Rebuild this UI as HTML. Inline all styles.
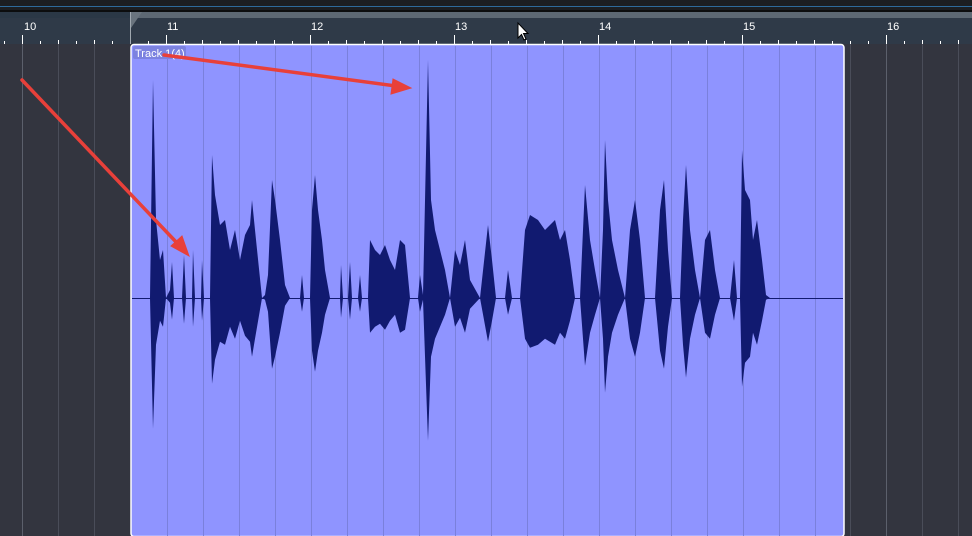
<!DOCTYPE html>
<html><head><meta charset="utf-8"><style>
body{margin:0;width:972px;height:536px;overflow:hidden;background:#33353f;font-family:"Liberation Sans",sans-serif;position:relative}
div{position:absolute}
</style></head><body>
<div style="left:0;top:0;width:972px;height:12px;background:#1c1e21"></div>
<div style="left:0;top:6px;width:972px;height:1px;background:#2e6a9a"></div>
<div style="left:0;top:10px;width:972px;height:2px;background:#0c0d0e"></div>
<div style="left:0;top:12px;width:972px;height:32px;background:#2f3a48"></div>
<div style="left:0;top:12px;width:130px;height:6px;background:#2b3846"></div>
<div style="left:130px;top:12px;width:842px;height:6px;background:#5d6873"></div>
<div style="left:130px;top:12px;width:1px;height:32px;background:#a0a8b0"></div>
<svg style="position:absolute;left:0;top:0" width="972" height="536">
<polygon points="131,12 142,12 131,28" fill="#6a747e"/>
<g id="ticks"></g>
<g stroke="#ffffff" stroke-width="1">
<path d="M22.5 35V44M166.5 35V44M310.5 35V44M454.5 35V44M598.5 35V44M742.5 35V44M886.5 35V44"/>
<path d="M4.5 41V44M40.5 41V44M58.5 40V44M76.5 41V44M94.5 40V44M112.5 41V44M148.5 41V44M184.5 41V44M202.5 40V44M220.5 41V44M238.5 40V44M256.5 41V44M274.5 40V44M292.5 41V44M328.5 41V44M346.5 40V44M364.5 41V44M382.5 40V44M400.5 41V44M418.5 40V44M436.5 41V44M472.5 41V44M490.5 40V44M508.5 41V44M526.5 40V44M544.5 41V44M562.5 40V44M580.5 41V44M616.5 41V44M634.5 40V44M652.5 41V44M670.5 40V44M688.5 41V44M706.5 40V44M724.5 41V44M760.5 41V44M778.5 40V44M796.5 41V44M814.5 40V44M832.5 41V44M850.5 41V44M868.5 41V44M904.5 41V44M922.5 40V44M940.5 41V44M958.5 40V44"/>
</g>
<g fill="#fff" font-size="11" font-family="Liberation Sans">
<text x="24" y="30">10</text><text x="167" y="30">11</text><text x="311" y="30">12</text><text x="455" y="30">13</text><text x="599" y="30">14</text><text x="743" y="30">15</text><text x="887" y="30">16</text>
</g>
<g stroke="#4a4d59" stroke-width="1">
<path d="M58.5 44V536M94.5 44V536M886.5 44V536M922.5 44V536M958.5 44V536M850.5 44V536"/>
</g>
<g stroke="#5c606c"><path d="M22.5 44V536M886.5 44V536"/></g>
<rect x="131" y="44.5" width="713" height="492" rx="3" fill="#8f94ff" stroke="#ffffff" stroke-width="1.5"/>
<g stroke="#7a80dc" stroke-width="1">
<path d="M167.5 46V536M203.5 46V536M239.5 46V536M275.5 46V536M311.5 46V536M347.5 46V536M383.5 46V536M419.5 46V536M455.5 46V536M491.5 46V536M527.5 46V536M563.5 46V536M599.5 46V536M635.5 46V536M671.5 46V536M707.5 46V536M743.5 46V536M779.5 46V536M815.5 46V536"/>
</g>
<rect x="133" y="46" width="53" height="13" rx="2" fill="#7c82e0"/>
<text x="135" y="57" font-size="11" fill="#fff" font-family="Liberation Sans">Track 1(4)</text>
<g fill="#111a70">
<polygon id="wt" points="150,298 153,80 156,220 160,260 163,250 166,298 170,290 172,262 174,298 182,298 184,255 186,298 192,298 193,250 195,298 201,298 202,260 204,298 210,298 212,155 215,195 220,225 225,220 230,250 235,230 240,260 245,235 250,225 252,200 255,230 262,298 265,295 268,275 272,180 275,200 280,240 285,285 290,298 300,298 302,275 304,298 310,298 312,210 315,175 318,210 322,240 325,270 330,298 340,298 341,265 343,298 348,298 350,262 352,298 358,298 360,275 362,298 368,298 370,240 375,250 380,255 385,245 390,260 395,270 400,240 405,245 410,298 418,298 420,275 423,295 428,60 431,200 435,230 440,250 445,270 450,298 455,250 460,265 465,240 470,280 480,298 488,225 492,260 496,298 505,298 508,270 512,298 520,298 525,230 530,215 538,220 545,230 555,220 560,240 565,230 570,260 575,298 580,298 585,185 590,240 595,270 600,298 603,230 605,140 608,200 612,240 618,270 625,298 630,230 635,200 640,240 645,298 655,298 660,210 664,180 668,250 672,298 680,298 683,220 686,165 690,230 695,270 700,298 705,240 710,230 715,270 720,298 730,298 734,260 737,298 740,298 742,150 745,190 750,200 753,240 757,220 762,260 766,295 770,298"/>
<polygon points="150,298 153,80 156,220 160,260 163,250 166,298 170,290 172,262 174,298 182,298 184,255 186,298 192,298 193,250 195,298 201,298 202,260 204,298 210,298 212,155 215,195 220,225 225,220 230,250 235,230 240,260 245,235 250,225 252,200 255,230 262,298 265,295 268,275 272,180 275,200 280,240 285,285 290,298 300,298 302,275 304,298 310,298 312,210 315,175 318,210 322,240 325,270 330,298 340,298 341,265 343,298 348,298 350,262 352,298 358,298 360,275 362,298 368,298 370,240 375,250 380,255 385,245 390,260 395,270 400,240 405,245 410,298 418,298 420,275 423,295 428,60 431,200 435,230 440,250 445,270 450,298 455,250 460,265 465,240 470,280 480,298 488,225 492,260 496,298 505,298 508,270 512,298 520,298 525,230 530,215 538,220 545,230 555,220 560,240 565,230 570,260 575,298 580,298 585,185 590,240 595,270 600,298 603,230 605,140 608,200 612,240 618,270 625,298 630,230 635,200 640,240 645,298 655,298 660,210 664,180 668,250 672,298 680,298 683,220 686,165 690,230 695,270 700,298 705,240 710,230 715,270 720,298 730,298 734,260 737,298 740,298 742,150 745,190 750,200 753,240 757,220 762,260 766,295 770,298" transform="translate(0,298) scale(1,-0.6) translate(0,-298)"/>
</g>
<line x1="132" y1="298.5" x2="843" y2="298.5" stroke="#111a70" stroke-width="1"/>
<g stroke="#e8403a" stroke-width="3.5" fill="#e8403a" stroke-linecap="round">
<line x1="22" y1="80" x2="178" y2="244"/>
<polygon points="189,256 171,246 182,236" stroke-width="1"/>
<line x1="164" y1="55" x2="396" y2="86"/>
<polygon points="411,88 391,94 393,79" stroke-width="1"/>
</g>
<path d="M518 23V38L521.5 34.5L524 40L526 39L523.5 33.5H528Z" fill="#fff" stroke="#000" stroke-width="1"/>
</svg>
</body></html>
